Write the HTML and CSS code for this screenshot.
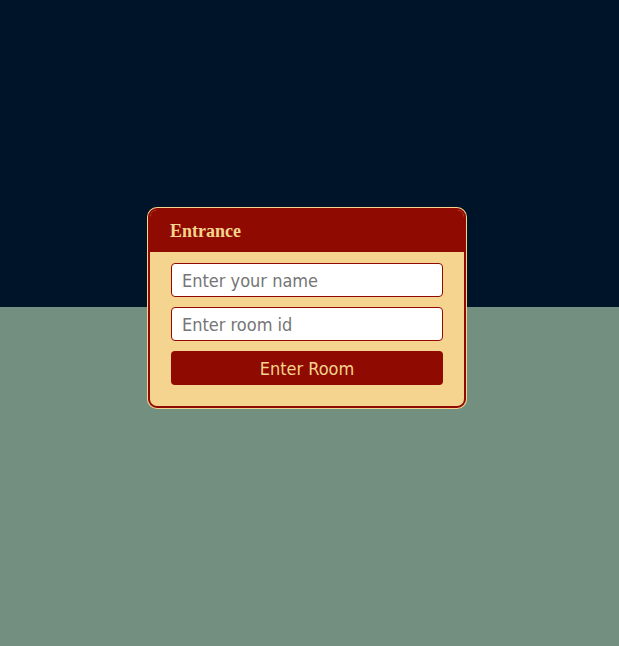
FILE: index.html
```html
<!DOCTYPE html>
<html>
<head>
<meta charset="utf-8">
<link rel="stylesheet" href="styles.css">
</head>
<body>
<div class="page">
  <div class="card">
    <div class="card-header">Entrance</div>
    <div class="card-body">
      <input class="field" type="text" placeholder="Enter your name">
      <input class="field" type="text" placeholder="Enter room id">
      <button class="btn">Enter Room</button>
    </div>
  </div>
</div>
</body>
</html>
```
FILE: styles.css
```css
html, body {
  margin: 0;
  padding: 0;
  height: 100%;
}
body {
  background: linear-gradient(to bottom, #001429 0, #001429 307px, #728f80 307px, #728f80 100%);
  font-family: "DejaVu Sans", Verdana, sans-serif;
}
.page {
  display: flex;
  align-items: flex-start;
  padding: 208px 0 0 148px;
}
.card {
  width: 314px;
  border: 2px solid #8f0a00;
  border-radius: 9px;
  box-shadow: 0 0 0 1px #f4d48e;
  background: #f4d48e;
  overflow: hidden;
}
.card-header {
  background: #8f0a00;
  color: #f4d48e;
  font-family: "Liberation Serif", "Times New Roman", serif;
  font-weight: bold;
  font-size: 18px;
  height: 42px;
  line-height: 42px;
  padding-left: 20px;
  box-sizing: border-box;
}
.card-body {
  display: flex;
  flex-direction: column;
  gap: 10px;
  padding: 11px 21px 21px 21px;
}
.field {
  height: 34px;
  box-sizing: border-box;
  border: 1px solid #8f0a00;
  border-radius: 4px;
  background: #fff;
  padding: 0 10px;
  font-family: "DejaVu Sans", Verdana, sans-serif;
  font-stretch: condensed;
  font-size: 18px;
  color: #333;
  outline: none;
}
.field::placeholder {
  color: #757575;
}
.btn {
  height: 34px;
  border: none;
  border-radius: 4px;
  background: #8f0a00;
  color: #f4d48e;
  font-family: "DejaVu Sans", Verdana, sans-serif;
  font-stretch: condensed;
  font-size: 18px;
  cursor: pointer;
}
```
